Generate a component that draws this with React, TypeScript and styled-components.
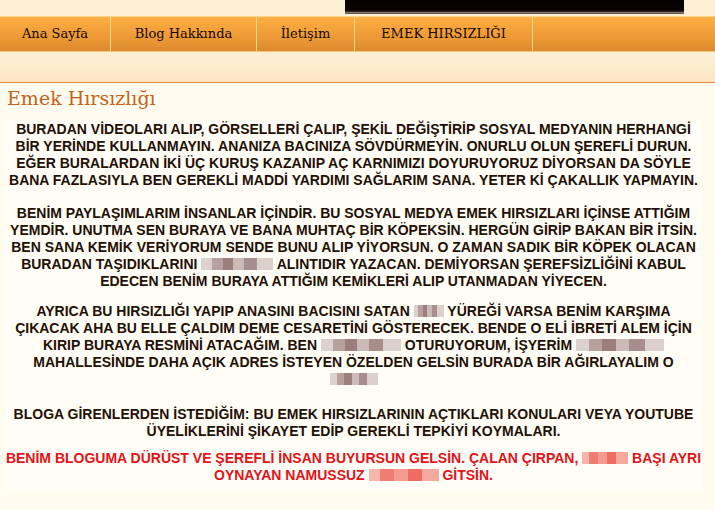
import styled, { createGlobalStyle } from 'styled-components';

const GlobalStyle = createGlobalStyle`
  html, body {
    margin: 0;
    padding: 0;
    background: #fffbef;
  }
`;

const Page = styled.div`
  width: 715px;
  min-height: 510px;
  background: #fffbef;
  font-family: "Liberation Serif", "DejaVu Serif", serif;
`;

const Top = styled.header`
  background: #fdf0d4;
  border-bottom: 1px solid #e58f2c;
`;

const Banner = styled.div`
  height: 16px;
  padding-left: 345px;
`;

const BannerImage = styled.div`
  width: 339px;
  height: 14px;
  background: linear-gradient(180deg, #050101 0%, #0a0202 70%, #3a2a24 85%, #b8aca4 92%, #14100e 100%);
`;

const Nav = styled.nav`
  display: flex;
  height: 34px;
  background: linear-gradient(180deg, #fcae43 0%, #f09d38 50%, #dd8a2f 100%);
  border-top: 1px solid #fdd48c;
  border-bottom: 1px solid #f6c57c;
`;

const NavItem = styled.a<{ $w: number }>`
  display: flex;
  align-items: center;
  justify-content: center;
  width: ${(p) => p.$w}px;
  flex: none;
  padding-bottom: 1px;
  border-right: 1px solid #fbd689;
  color: #140802;
  font-family: Georgia, "DejaVu Serif", serif;
  font-size: 13px;
  text-decoration: none;
  cursor: pointer;
`;

const SubBand = styled.div`
  height: 30px;
  background: linear-gradient(180deg, #fdf0d3 0%, #fceccb 60%, #fbe6c2 100%);
`;

const Post = styled.main`
  padding: 2px 13px 20px 5px;
`;

const Title = styled.h1`
  margin: 0 0 0 2px;
  font-family: Georgia, "DejaVu Serif", serif;
  font-weight: normal;
  font-size: 19px;
  line-height: 26px;
  color: #c4621c;
`;

const Body = styled.div`
  margin-top: 10px;
  background: #fffdf6;
  padding: 0 0 6px;
`;

const Para = styled.p<{ $red?: boolean; $gap?: number }>`
  margin: ${(p) => p.$gap ?? 0}px 0 0;
  text-align: center;
  font-family: "Liberation Sans", Arial, sans-serif;
  font-weight: bold;
  font-size: 14px;
  line-height: 17px;
  color: ${(p) => (p.$red ? '#e3131a' : '#231005')};
`;

const Blur = styled.span<{ $w: number; $red?: boolean }>`
  display: inline-block;
  vertical-align: -1px;
  width: ${(p) => p.$w}px;
  height: 12px;
  background: ${(p) =>
    p.$red
      ? 'linear-gradient(90deg, #f7b5ad 0 15%, #ef7d72 15% 35%, #f49a8e 35% 55%, #ee6c62 55% 75%, #f6a89e 75% 100%)'
      : 'linear-gradient(90deg, #ddd1cc 0 15%, #b8a19d 15% 30%, #9c7f7b 30% 45%, #cbbab5 45% 60%, #a88e8a 60% 78%, #dcd0cb 78% 100%)'};
`;

export default function App() {
  const menu = [
    { label: 'Ana Sayfa', w: 110 },
    { label: 'Blog Hakkında', w: 145 },
    { label: 'İletişim', w: 97 },
    { label: 'EMEK HIRSIZLIĞI', w: 177 },
  ];

  return (
    <>
      <GlobalStyle />
      <Page>
        <Top>
          <Banner>
            <BannerImage />
          </Banner>
          <Nav>
            {menu.map((m) => (
              <NavItem key={m.label} $w={m.w}>
                {m.label}
              </NavItem>
            ))}
          </Nav>
          <SubBand />
        </Top>
        <Post>
          <Title>Emek Hırsızlığı</Title>
          <Body>
            <Para>
              BURADAN VİDEOLARI ALIP, GÖRSELLERİ ÇALIP, ŞEKİL DEĞİŞTİRİP SOSYAL MEDYANIN HERHANGİ<br />
              BİR YERİNDE KULLANMAYIN. ANANIZA BACINIZA SÖVDÜRMEYİN. ONURLU OLUN ŞEREFLİ DURUN.<br />
              EĞER BURALARDAN İKİ ÜÇ KURUŞ KAZANIP AÇ KARNIMIZI DOYURUYORUZ DİYORSAN DA SÖYLE<br />
              BANA FAZLASIYLA BEN GEREKLİ MADDİ YARDIMI SAĞLARIM SANA. YETER Kİ ÇAKALLIK YAPMAYIN.
            </Para>
            <Para $gap={16}>
              BENİM PAYLAŞIMLARIM İNSANLAR İÇİNDİR. BU SOSYAL MEDYA EMEK HIRSIZLARI İÇİNSE ATTIĞIM<br />
              YEMDİR. UNUTMA SEN BURAYA VE BANA MUHTAÇ BİR KÖPEKSİN. HERGÜN GİRİP BAKAN BİR İTSİN.<br />
              BEN SANA KEMİK VERİYORUM SENDE BUNU ALIP YİYORSUN. O ZAMAN SADIK BİR KÖPEK OLACAN<br />
              BURADAN TAŞIDIKLARINI <Blur $w={72} /> ALINTIDIR YAZACAN. DEMİYORSAN ŞEREFSİZLİĞİNİ KABUL<br />
              EDECEN BENİM BURAYA ATTIĞIM KEMİKLERİ ALIP UTANMADAN YİYECEN.
            </Para>
            <Para $gap={13}>
              AYRICA BU HIRSIZLIĞI YAPIP ANASINI BACISINI SATAN <Blur $w={30} /> YÜREĞİ VARSA BENİM KARŞIMA<br />
              ÇIKACAK AHA BU ELLE ÇALDIM DEME CESARETİNİ GÖSTERECEK. BENDE O ELİ İBRETİ ALEM İÇİN<br />
              KIRIP BURAYA RESMİNİ ATACAĞIM. BEN <Blur $w={80} /> OTURUYORUM, İŞYERİM <Blur $w={88} /><br />
              MAHALLESİNDE DAHA AÇIK ADRES İSTEYEN ÖZELDEN GELSİN BURADA BİR AĞIRLAYALIM O<br />
              <Blur $w={48} />
            </Para>
            <Para $gap={18}>
              BLOGA GİRENLERDEN İSTEDİĞİM: BU EMEK HIRSIZLARININ AÇTIKLARI KONULARI VEYA YOUTUBE<br />
              ÜYELİKLERİNİ ŞİKAYET EDİP GEREKLİ TEPKİYİ KOYMALARI.
            </Para>
            <Para $red $gap={10}>
              BENİM BLOGUMA DÜRÜST VE ŞEREFLİ İNSAN BUYURSUN GELSİN. ÇALAN ÇIRPAN, <Blur $red $w={46} /> BAŞI AYRI<br />
              OYNAYAN NAMUSSUZ <Blur $red $w={70} /> GİTSİN.
            </Para>
          </Body>
        </Post>
      </Page>
    </>
  );
}
